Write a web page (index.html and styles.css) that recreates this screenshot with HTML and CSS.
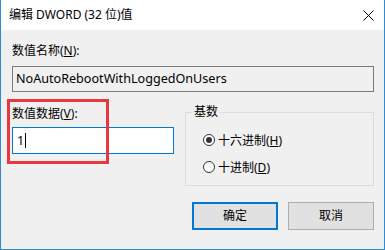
FILE: index.html
```html
<!DOCTYPE html>
<html lang="zh-CN">
<head>
<meta charset="utf-8">
<title>编辑 DWORD (32 位)值</title>
<link rel="stylesheet" href="styles.css">
</head>
<body>
<div class="window">
  <div class="titlebar">
    <span class="title">编辑 DWORD (32 位)值</span>
    <span class="close">
      <svg width="11" height="11" viewBox="0 0 11 11"><path d="M0.5 0.5 L10.5 10.5 M10.5 0.5 L0.5 10.5" stroke="#000" stroke-width="1" fill="none"/></svg>
    </span>
  </div>
  <div class="content">
    <div class="label first">数值名称(<u>N</u>):</div>
    <div class="textbox readonly">NoAutoRebootWithLoggedOnUsers</div>
    <div class="row">
      <div class="leftcol">
        <div class="label second">数值数据(<u>V</u>):</div>
        <div class="textbox focused"><span>1</span><span class="caret"></span></div>
      </div>
      <fieldset class="group">
        <legend>基数</legend>
        <div class="radio"><span class="dot checked"></span><span>十六进制(<u>H</u>)</span></div>
        <div class="radio"><span class="dot"></span><span>十进制(<u>D</u>)</span></div>
      </fieldset>
    </div>
    <div class="buttons">
      <div class="btn default">确定</div>
      <div class="btn">取消</div>
    </div>
    <div class="highlight"></div>
  </div>
</div>
</body>
</html>
```
FILE: styles.css
```css
* { box-sizing: border-box; }
html, body { margin: 0; padding: 0; }
body {
  width: 385px;
  height: 250px;
  overflow: hidden;
  font-family: "Noto Sans", "Noto Sans CJK SC", sans-serif;
  font-size: 12px;
  color: #000;
}
.window {
  width: 385px;
  height: 250px;
  border-left: 1px solid #2f8bd6;
  border-right: 1px solid #2f8bd6;
  border-bottom: 1px solid #2f8bd6;
  background: #f0f0f0;
  display: flex;
  flex-direction: column;
}
.titlebar {
  height: 30px;
  background: #fff;
  display: flex;
  align-items: center;
  justify-content: space-between;
  padding: 0 10px 0 8px;
  flex: none;
}
.title { font-size: 12px; line-height: 16px; }
.close { display: flex; width: 11px; height: 11px; }
.content {
  position: relative;
  padding: 0 10px 0 11px;
  flex: 1;
}
.label { line-height: 16px; white-space: nowrap; }
.label.first { margin-top: 13px; }
.label u, .radio u { text-decoration: underline; text-underline-offset: 1px; }
.textbox {
  height: 26px;
  border: 1px solid #7a7a7a;
  padding: 0 3px;
  display: flex;
  align-items: center;
  white-space: nowrap;
  line-height: 16px;
}
.readonly { margin-top: 7px; background: #f0f0f0; font-size: 12.6px; }
.focused { margin-top: 5px; height: 27px; border-color: #0078d7; background: #fff; padding-left: 4px; font-size: 12.6px; }
.caret { display: inline-block; width: 1px; height: 15px; background: #000; margin-left: 1px; }
.row { display: flex; margin-top: 12px; }
.leftcol { width: 162px; flex: none; }
.label.second { margin-top: 2px; }
.group {
  margin: 0 0 0 11px;
  padding: 12px 0 10px 17px;
  border: 1px solid #dcdcdc;
  flex: 1;
  min-width: 0;
}
.group legend { padding: 0 2px; margin-left: -11px; line-height: 16px; }
.radio { display: flex; align-items: center; height: 16px; gap: 3px; }
.radio + .radio { margin-top: 11px; }
.dot {
  width: 12px;
  height: 12px;
  border: 1px solid #333;
  border-radius: 50%;
  background: #fff;
  display: flex;
  align-items: center;
  justify-content: center;
  flex: none;
}
.dot.checked::after {
  content: "";
  width: 6px;
  height: 6px;
  border-radius: 50%;
  background: #333;
}
.buttons { display: flex; justify-content: flex-end; gap: 10px; margin-top: 16px; }
.btn {
  width: 86px;
  height: 28px;
  background: #e1e1e1;
  border: 1px solid #adadad;
  display: flex;
  align-items: center;
  justify-content: center;
  line-height: 16px;
}
.btn.default { border: 2px solid #0078d7; }
.highlight {
  position: absolute;
  left: 6px;
  top: 69px;
  width: 102px;
  height: 65px;
  border: 3px solid #e8383d;
  pointer-events: none;
}
```
